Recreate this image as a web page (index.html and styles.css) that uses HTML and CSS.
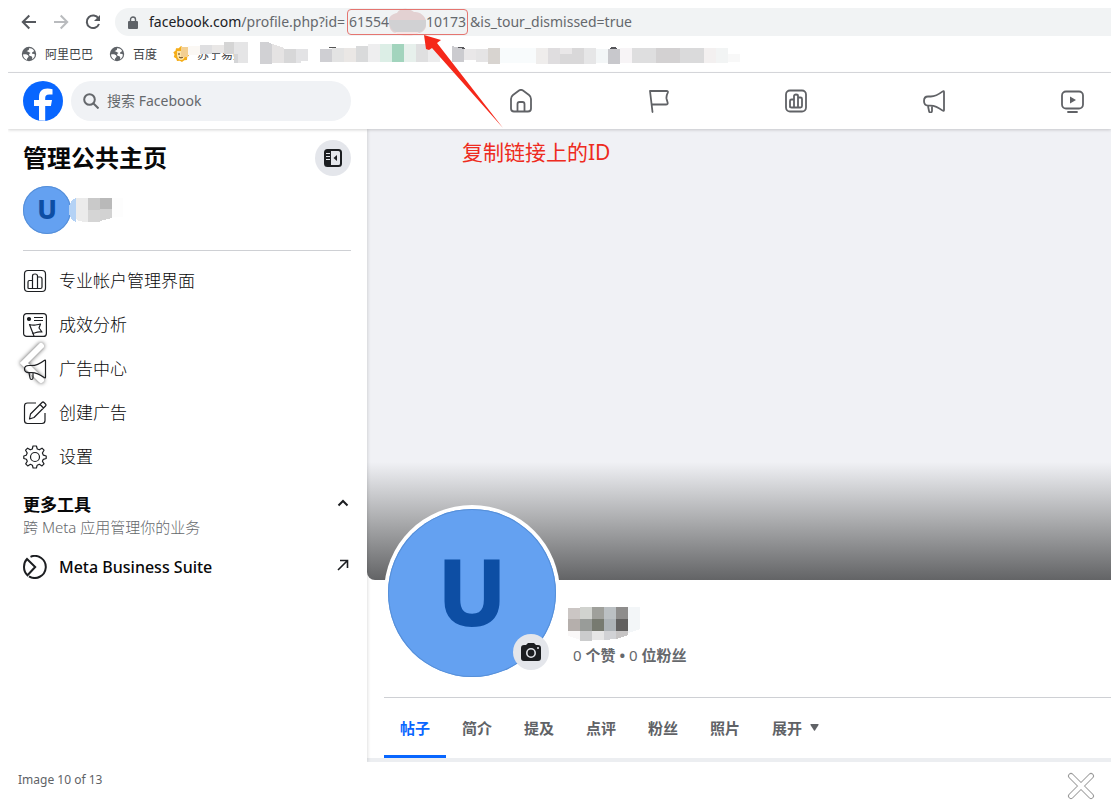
FILE: index.html
```html
<!DOCTYPE html>
<html lang="zh-CN">
<head>
<meta charset="utf-8">
<meta name="viewport" content="width=device-width, initial-scale=1">
<title>Facebook</title>
<link rel="stylesheet" href="styles.css">
</head>
<body>
<div class="viewer">
<div class="stage">
  <div class="toolbar">
    <button class="tool" aria-label="后退"><svg viewBox="0 0 16 16"><path d="M15 8H2M8.300 1.500 1.800 8l6.500 6.500"/></svg></button>
    <button class="tool muted" aria-label="前进"><svg viewBox="0 0 16 16"><path d="M1 8h13M7.700 1.500 14.200 8l-6.500 6.500"/></svg></button>
    <button class="tool" aria-label="刷新"><svg viewBox="0 0 16 16"><path d="M13.500 4.500A6.300 6.300 0 1 0 14 10"/><path class="solid" d="M15 1v6H9z"/></svg></button>
    <div class="address">
      <svg class="lock" viewBox="0 0 10 13"><path d="M1 5h8q1 0 1 1v6q0 1-1 1H1q-1 0-1-1V6q0-1 1-1z" fill="#5f6368"/><path d="M2.500 6V3.500a2.500 2.500 0 0 1 5 0V6" fill="none" stroke="#5f6368" stroke-width="1.400"/></svg>
      <span class="url"><b>facebook.com</b>/profile.php?id=<span class="page-id">61554<svg class="smudge" viewBox="0 0 37 28"><path d="M0 14C-1 8 4 6 8 5C11-1 21 0 25 4C31 3 38 9 37 15C38 20 34 25 29 25C22 29 14 28 8 25C2 25 0 20 0 14z" fill="#e3d1d2"/><path d="M0 12h37v4q-1 7-8 8H7q-7-3-7-12z" fill="#d1d1d3"/><path d="M6 24h24q-4 4-12 4-8 0-12-4z" fill="#f6e6e6"/></svg>10173</span>&amp;is_tour_dismissed=true</span>
    </div>
  </div>
  <div class="bookmarks">
    <a href="#"><svg class="globe" viewBox="0 0 16 16"><circle cx="8" cy="8" r="7.200" fill="#5f6368"/><path d="M2 8.500c2.500-.5 5 0 5.500 1.500s-1.800 1.600-1.500 4C3.500 13 2 11 2 8.500zM8 2.200c2.500-.3 4.300 1 5.200 2.800-.8 1-2 .8-2.200 2-.3 1.500 2.500.2 2.800 1.800.1 2-1.300 3.600-2.800 4.500.8-2.300-.3-3-1.600-3.200-2-.6-1.500-2.500.2-3.100C8 6.500 7 5 5.500 5.300 6.500 4.500 8.500 4.500 8 2.200z" fill="#fff"/></svg>阿里巴巴</a>
    <a href="#"><svg class="globe" viewBox="0 0 16 16"><circle cx="8" cy="8" r="7.200" fill="#5f6368"/><path d="M2 8.500c2.500-.5 5 0 5.500 1.500s-1.800 1.600-1.500 4C3.500 13 2 11 2 8.500zM8 2.200c2.500-.3 4.300 1 5.200 2.800-.8 1-2 .8-2.200 2-.3 1.500 2.500.2 2.800 1.800.1 2-1.300 3.600-2.800 4.500.8-2.300-.3-3-1.600-3.200-2-.6-1.500-2.500.2-3.100C8 6.500 7 5 5.500 5.300 6.500 4.500 8.500 4.500 8 2.200z" fill="#fff"/></svg>百度</a>
    <a href="#" class="covered"><svg class="globe" viewBox="0 0 16 16"><path d="M8 0l2 1.500 2.500-.3 1 2.300 2.300 1L15.300 7 16 9.500l-1.800 1.800L14 14l-2.700.3L9 16l-2.300-1.300-2.700.3-.8-2.500L.8 11 1.500 8.500.3 6.200 2.500 4.800 3 2.200l2.700.1z" fill="#f5ad18"/><path d="M4 5h8v5q-1 4-4 4t-4-4z" fill="#ffe4a6"/><path d="M6 7v2M9 8v2M6 11q2 2 4 0" stroke="#55391a" fill="none"/></svg>苏宁易购
      <svg class="redaction" viewBox="180 40 560 28" shape-rendering="crispEdges">
        <path d="M181 47h7v10h-7z" fill="#f3cf91"/><path d="M188 46h12v9h-12z" fill="#fbf8f4"/><path d="M200 45h12v9h-12z" fill="#dfdfe1"/><path d="M212 45h12v8h-12z" fill="#e9e7e6"/><path d="M224 42h12v12h-12z" fill="#d5d5d5"/><path d="M234 42h14v21h-14z" fill="#e5e5e6"/><path d="M234 54h4v9h-4z" fill="#d4d5d7"/><path d="M188 60h46v6h-46z" fill="#fff"/>
        <path d="M260 42h8l4 2v20h-12z" fill="#d1d1d4"/><path d="M272 44l12 4v15h-12z" fill="#e5e3e3"/><path d="M284 49h12v14h-12z" fill="#d7d7d8"/><path d="M296 49h12v12h-7v2h-5z" fill="#e3e3e5"/>
        <path d="M328 48q5-3 9 0z" fill="#555"/><path d="M320 49h12v13h-12z" fill="#cfcfd3"/><path d="M332 48h12v14h-12z" fill="#e3e3e3"/><path d="M344 48h12v14h-12z" fill="#eae7e5"/><path d="M356 46h12v16h-12z" fill="#d9dadb"/><path d="M368 44h12v18h-12z" fill="#eeeeef"/><path d="M380 44h12v18h-12z" fill="#dceee6"/><path d="M392 44h12v18h-12z" fill="#a2d4bd"/><path d="M404 44h12v18h-12z" fill="#e7f0ec"/><path d="M416 44h12v18h-12z" fill="#dfdfe0"/><path d="M428 46h12v16h-12z" fill="#ececed"/>
        <path d="M457 48q4-2 8 0v1h-8zM610 48q4-2 7 0v1h-7z" fill="#56565a"/><path d="M452 46l12 3v13h-12z" fill="#cbcbcf"/><path d="M464 49h12v11h-12z" fill="#e9e7e8"/><path d="M476 49h12v13h-12z" fill="#e5e4e5"/><path d="M488 48h12v16h-12z" fill="#d8d4d0"/><path d="M500 48h36v15h-36z" fill="#f8fbfc"/><path d="M536 48h12v16h-12z" fill="#efedec"/><path d="M548 48h12v16h-12z" fill="#dfdddf"/><path d="M560 48h24v16h-24z" fill="#d9d8d9"/><path d="M560 48h12v6h-12z" fill="#e9e7e8"/><path d="M584 48h12v16h-12z" fill="#e6e6e7"/><path d="M596 49h12v14h-12z" fill="#f3f6f7"/><path d="M608 49h12v15h-12z" fill="#c8c8cc"/><path d="M620 48h12v15h-12z" fill="#f7f4f6"/><path d="M632 48h24v15h-24z" fill="#dededf"/><path d="M656 48h24v15h-24z" fill="#d3d1d2"/><path d="M680 48h24v15h-24z" fill="#dadadb"/><path d="M704 48h12v15h-12z" fill="#f3f0f0"/><path d="M716 48h12v15h-12z" fill="#f2f4f4"/><path d="M728 54h12v8h-12z" fill="#f8f8f8"/>
      </svg></a>
  </div>
  <header class="site-header">
    <a href="#" class="logo" aria-label="Facebook"><svg viewBox="0 0 40 40"><circle cx="20" cy="20" r="20" fill="#0866ff"/><path d="M16 39.500V25h-5v-6h5v-2.500C16 10.500 19 7.500 24.500 7.500c1.500 0 3.500.2 5 .7v5.300h-3.300c-3 0-4 1.200-4 3.600V19h6.800l-1.100 6h-5.700v14.800z" fill="#fff"/></svg></a>
    <label class="search"><svg viewBox="0 0 16 16"><circle cx="6.500" cy="6.500" r="5.300"/><path d="m10.500 10.500 5 5"/></svg><input type="search" placeholder="搜索 Facebook" aria-label="搜索 Facebook"></label>
    <nav class="site-nav">
      <a href="#" aria-label="首页"><svg viewBox="0 0 24 24"><path d="M2 10Q2 7.500 4 6l6-4.500q2-1.300 4 0L20 6q2 1.500 2 4v9.500q0 3-3 3H5q-3 0-3-3zM8.500 22v-7q0-2 2-2h3q2 0 2 2v7"/></svg></a>
      <a href="#" aria-label="公共主页"><svg viewBox="0 0 24 24"><path d="M5.500 23 3 2h16.500q2 0 1.200 1.800Q19 7 19.600 10l1 3.500q.5 2-1.600 2H4.700"/></svg></a>
      <a href="#" aria-label="管理界面"><svg viewBox="0 0 24 24"><rect x="2" y="1.500" width="20" height="21" rx="4"/><path d="M6 18v-6q0-1.500 1.500-1.500H10V7q0-1.500 2-1.500T14 7v11.500H7.500Q6 18.500 6 17zm4-7.500v8m4-10h2.500q1.500 0 1.500 1.500v7q0 1.500-1.500 1.500H14"/></svg></a>
      <a href="#" aria-label="广告"><svg viewBox="0 0 24 24"><path d="M22 3v18q0 1.500-1.300.6-6.700-5-12-5H6Q2 16.500 2 12t4-4.500h2.700q5.300 0 12-5.100Q22 1.500 22 3zM6 17l1 5q.2 1.500 1.500 1.500T10 22v-5"/></svg></a>
      <a href="#" aria-label="视频"><svg viewBox="0 0 24 24"><rect x="2" y="2.500" width="21" height="17" rx="4"/><path d="M8 23h9"/><path class="solid" d="M10 7.500v7l6-3.500z"/></svg></a>
    </nav>
  </header>
  <div class="columns">
    <aside class="sidebar">
      <div class="side-head"><h1>管理公共主页</h1><button class="round" aria-label="收起侧栏"><svg viewBox="0 0 20 20"><rect x="2" y="2" width="16" height="16" rx="2.500" fill="none" stroke="#1c1e21" stroke-width="2"/><path d="M2 2h6v16H2z" fill="#1c1e21"/><path d="M3 5.500h4M3 8.500h4M3 11.500h4" stroke="#e4e6eb"/><path d="m14 7-3.500 3 3.500 3z" fill="#1c1e21"/></svg></button></div>
      <div class="account"><span class="avatar small">U</span><svg class="name-mask" viewBox="0 0 54 24" shape-rendering="crispEdges"><path d="M7 0v24Q0 22 0 12T7 0z" fill="#b4d2f5"/><path d="M7 0h12v24Q7 24 7 20z" fill="#ebebeb"/><path d="M19 0h12v24H19z" fill="#c9c9c9"/><path d="M31 0h12v20l-12 3z" fill="#d2d2d2"/><path d="M31 0h12v11H31z" fill="#b9b9b9"/><path d="M19 12h12v12H19z" fill="#d5d5d5"/><path d="M43 0h11v19H43z" fill="#fdfdfd"/></svg></div>
      <nav class="menu">
        <a href="#"><svg viewBox="0 0 24 24"><rect x="1.500" y="1.500" width="21" height="21" rx="3.500"/><path d="M5 19v-6q0-1.500 1.500-1.500H9.500V7q0-2 2.500-2t2.500 2v12.500H6Q5 19.500 5 18.500zm4.500-7.500v8m5-11.500H17q2 0 2 2v8q0 1.500-1.500 1.500h-3"/></svg><span>专业帐户管理界面</span></a>
        <a href="#"><svg viewBox="0 0 24 24"><rect x=".6" y=".6" width="22.800" height="22.800" rx="3"/><circle cx="6" cy="6" r="1.500" fill="#1c1e21"/><path d="M11 4.500h9M11 7.500h9M11 23 6.500 11.500q3 1 6 .5t5-1l-1.500 4 3 4q-4-.5-6 .5t-4 .5"/></svg><span>成效分析</span></a>
        <a href="#"><svg viewBox="0 0 24 24"><path d="M22.500 4v16q0 1.500-1.300.6-6.700-5-12.500-5H6Q1.500 15.500 1.500 12T6 8.500h2.700q5.800 0 12.500-5.100 1.300-.9 1.300.6zM6 16l1 5q.2 1.500 1.500 1.500T10 21v-5"/></svg><span>广告中心</span></a>
        <a href="#"><svg viewBox="0 0 24 24"><path d="M13 2H4.500Q1.500 2 1.500 5v14.500q0 3 3 3h14.500q3 0 3-3V12M6.500 18l1-5L19 1.500q1-1 2 0l1.500 1.500q1 1 0 2L11 16.500zM17 3.500 20.500 7"/></svg><span>创建广告</span></a>
        <a href="#"><svg viewBox="0 0 24 24"><circle cx="12" cy="12" r="4.500"/><path d="m10 1-.7 3-2 .8-2.700-1.600-2 2L4.200 8l-1 2.200L.8 11v2.500l2.600.8.9 2-1.600 2.600 2 2 2.700-1.600 2 .9.7 2.800h3.300l.8-2.800 2.100-.9 2.700 1.600 2-2-1.600-2.600.9-2 2.900-.8V11l-2.800-.8-1-2.200L21 5.200l-2-2-2.700 1.600-2-.8-.9-3z"/></svg><span>设置</span></a>
      </nav>
      <button class="more"><span><strong>更多工具</strong><small>跨 Meta 应用管理你的业务</small></span><svg viewBox="0 0 12 12"><path d="m1.500 8.500 4.500-4.500 4.500 4.500"/></svg></button>
      <a href="#" class="suite"><svg viewBox="0 0 24 24"><path d="M7.500 1.800A11 11 0 1 1 6 21.300M4 4l8.200 8L4.500 20.300Q1 17 1 12t3-8z"/></svg><span>Meta Business Suite</span><svg class="out" viewBox="0 0 12 12"><path d="M1 11 10.500 1.500M3 1.500h7.500V9"/></svg></a>
    </aside>
    <main class="profile">
      <div class="cover"></div>
      <section class="identity">
        <div class="portrait"><span class="avatar">U</span><button class="round camera" aria-label="更换头像"><svg viewBox="0 0 20 18"><path d="M3 2h2l2-2h6l2 2h2q3 0 3 3v10q0 3-3 3H3q-3 0-3-3V5q0-3 3-3z" fill="#1c1e21"/><circle cx="10" cy="10" r="4.200" fill="none" stroke="#e4e6eb" stroke-width="1.600"/><circle cx="17" cy="5" r="1" fill="#e4e6eb"/></svg></button></div>
        <div class="facts">
          <svg class="title-mask" viewBox="0 0 72 34" shape-rendering="crispEdges"><path d="M0 1h12v11H0z" fill="#cbc6c4"/><path d="M12 0h12v12H12z" fill="#d1d3cf"/><path d="M24 0h12v12H24z" fill="#9fa09b"/><path d="M36 0h12v12H36z" fill="#bbc0c3"/><path d="M48 0h12v12H48z" fill="#8e8d8c"/><path d="M60 0h12v22l-12 4z" fill="#f3f6f8"/><path d="M0 12h12v12H0z" fill="#b5afac"/><path d="M12 12h12v12H12z" fill="#999c99"/><path d="M24 12h12v12H24z" fill="#777a70"/><path d="M36 12h12v12H36z" fill="#adb3b7"/><path d="M48 12h12v12H48z" fill="#61605f"/><path d="M0 24h12v9L0 29z" fill="#faf8f8"/><path d="M12 24h12v10H12z" fill="#cbcccd"/><path d="M24 24h12v9H24z" fill="#e6e6e6"/><path d="M36 24h12v8l-12 1z" fill="#d1d2d5"/><path d="M48 24h12v4l-12 4z" fill="#c6c4c4"/></svg>
          <p><span>0</span> 个赞 • <span>0</span> 位粉丝</p>
        </div>
      </section>
      <nav class="tabs"><a href="#" class="active">帖子</a><a href="#">简介</a><a href="#">提及</a><a href="#">点评</a><a href="#">粉丝</a><a href="#">照片</a><a href="#">展开<svg viewBox="0 0 9 7"><path d="M1 0h7q1 0 .5 1L5 6.500q-.5.500-1 0L.5 1Q0 0 1 0z" fill="#606266"/></svg></a></nav>
    </main>
  </div>
  <div class="note">复制链接上的ID</div>
  <svg class="arrow" viewBox="0 0 82 96"><path d="M0 1 17 6 13 9 79 94 8 14 5 16 2 15z" fill="#f5281a"/></svg>
</div>
<footer class="caption">Image 10 of 13</footer>
<button class="previous" aria-label="上一张"><svg viewBox="0 0 36 48"><path d="m25 7-17 17 17 17"/></svg></button>
<button class="close" aria-label="关闭"><svg viewBox="0 0 28 28"><path class="edge" d="m4 4 20 20M24 4 4 24"/><path class="core" d="m4 4 20 20M24 4 4 24"/></svg></button>
</div>
</body>
</html>
```
FILE: styles.css
```css
* { box-sizing: border-box; }
body { margin: 0; background: #fff; color: #080809; font-family: "Noto Sans", "Noto Sans CJK SC", sans-serif; font-size: 15px; }
a { color: inherit; text-decoration: none; }
button { border: 0; padding: 0; background: none; color: inherit; font: inherit; cursor: pointer; }
svg { display: block; flex: none; }
h1, p { margin: 0; }

.viewer { position: relative; min-height: 100vh; }
.stage { position: relative; margin: 0 6px 0 8px; overflow: hidden; }

.toolbar { display: flex; align-items: center; gap: 16px; height: 44px; padding-left: 13px; }
.tool svg { width: 16px; height: 16px; fill: none; stroke: #55585d; stroke-width: 2; }
.tool.muted svg { stroke: #b9bbbe; }
.tool .solid { fill: #55585d; stroke: none; }
.address { flex: 1; display: flex; align-items: center; gap: 11px; height: 28px; margin-left: -2px; padding-left: 13px; background: #f1f3f4; border-radius: 14px 0 0 14px; }
.lock { width: 10px; height: 13px; }
.url { display: flex; align-items: center; padding-bottom: 1px; color: #65686d; font-size: 14px; white-space: pre; }
.url b { color: #202124; font-weight: 400; }
.page-id { display: flex; align-items: center; height: 22px; margin: 0 4px; outline: 1px solid #e57570; outline-offset: 1px; border-radius: 2px; }
.smudge { width: 37px; height: 28px; }

.bookmarks { display: flex; gap: 16px; height: 29px; padding: 0 0 8px 13px; border-bottom: 1px solid #dadce0; font-size: 12px; color: #3c4043; }
.bookmarks a { display: flex; align-items: center; gap: 8px; white-space: nowrap; }
.globe { width: 16px; height: 16px; }
.covered { position: relative; }
.redaction { position: absolute; left: 7px; top: -4px; width: 560px; height: 28px; }

.site-header { position: relative; display: flex; align-items: center; height: 56px; padding-left: 15px; background: #fff; box-shadow: 0 1px 3px #0000002e; z-index: 2; }
.logo svg { width: 40px; height: 40px; }
.search { display: flex; align-items: center; gap: 8px; width: 280px; height: 40px; margin-left: 8px; padding: 0 12px; border-radius: 20px; background: #f0f2f5; }
.search svg { width: 16px; height: 16px; fill: none; stroke: #65686c; stroke-width: 2; }
.search input { flex: 1; min-width: 0; border: 0; padding: 0 0 2px; outline: 0; background: none; font: inherit; font-size: 14px; }
.search input::placeholder { color: #65686c; opacity: 1; }
.site-nav { flex: 1; display: flex; margin: 0 -30px 0 101px; }
.site-nav a { flex: 1; display: flex; justify-content: center; }
.site-nav svg { width: 24px; height: 24px; fill: none; stroke: #606266; stroke-width: 1.8; stroke-linejoin: round; stroke-linecap: round; }
.site-nav .solid { fill: #606266; stroke: none; }

.columns { display: flex; }
.sidebar { width: 359px; flex: none; padding: 11px 16px 0 15px; box-shadow: 1px 0 3px #0000001f; z-index: 1; }
.side-head { display: flex; justify-content: space-between; align-items: center; }
h1 { font-size: 24px; line-height: 36px; font-weight: 700; }
.round { display: grid; place-items: center; width: 36px; height: 36px; border-radius: 50%; background: #e4e6eb; }
.round svg { width: 20px; height: 20px; }
.account { display: flex; align-items: center; padding: 10px 0 16px; border-bottom: 1px solid #ced0d4; }
.avatar { display: grid; place-items: center; width: 100%; aspect-ratio: 1; padding-bottom: 4px; border-radius: 50%; background: #64a1f1; box-shadow: inset 0 0 0 1px #568fd8; color: #0d4ea4; font-weight: 800; font-size: 92px; line-height: 1; }
.avatar.small { width: 48px; padding-bottom: 2px; font-size: 26px; }
.name-mask { width: 54px; height: 24px; margin-left: -2px; }
.menu { padding-top: 8px; }
.menu a { display: flex; align-items: center; gap: 12px; height: 44px; font-size: 17px; line-height: 24px; font-weight: 300; }
.menu span { padding-bottom: 1px; }
.menu svg { width: 24px; height: 24px; fill: none; stroke: #1c1e21; stroke-width: 1.2; stroke-linejoin: round; }
.more { display: flex; justify-content: space-between; width: 100%; padding-top: 15px; text-align: left; }
.more strong { display: block; font-size: 17px; line-height: 22px; }
.more small { display: block; color: #65686c; font-size: 15px; line-height: 22px; font-weight: 300; }
.more svg { width: 12px; height: 12px; margin: 3px 2px; fill: none; stroke: #1c1e21; stroke-width: 2; }
.suite { display: flex; align-items: center; gap: 12px; height: 36px; margin-top: 11px; font-size: 16px; font-weight: 500; }
.suite svg { width: 24px; height: 24px; fill: none; stroke: #1c1e21; stroke-width: 2; }
.suite .out { width: 12px; height: 12px; margin: 0 2px 4px auto; stroke-width: 1.6; }

.profile { flex: 1; min-width: 0; border-bottom: 4px solid #eceef1; }
.cover { height: 451px; border-radius: 0 0 0 8px; background: linear-gradient(#f0f1f5 0 333px, #a9aaac 393px, #636466 451px); }
.identity { position: relative; display: flex; gap: 8px; margin: -75px 0 0 17px; padding-bottom: 16px; }
.portrait { position: relative; width: 176px; padding: 4px; background: #fff; border-radius: 50%; }
.camera { position: absolute; right: 11px; bottom: 11px; }
.facts { padding-top: 102px; }
.title-mask { width: 72px; height: 34px; }
.facts p { padding: 3px 0 0 5px; color: #65686c; font-size: 15px; line-height: 22px; font-weight: 700; }
.facts span { font-weight: 400; }
.tabs { display: flex; height: 61px; margin-left: 17px; border-top: 1px solid #ced0d4; color: #606266; font-weight: 600; }
.tabs a { display: flex; align-items: center; gap: 8px; padding: 1px 16px 0; border-bottom: 3px solid transparent; }
.tabs .active { color: #0866ff; border-color: #0866ff; }
.tabs svg { width: 9px; height: 7px; }

.note { position: absolute; z-index: 3; left: 454px; top: 137px; color: #ee2b20; font-size: 21px; line-height: 30px; }
.arrow { position: absolute; z-index: 3; left: 416px; top: 34px; width: 82px; height: 96px; }
.caption { padding: 9px 18px; color: #606266; font-size: 12px; line-height: 18px; }
.previous { position: absolute; left: 16px; top: 339px; }
.previous svg { width: 36px; height: 48px; fill: none; stroke: #fff; stroke-width: 6; stroke-linecap: round; filter: drop-shadow(0 0 2px #000000b0); }
.close { position: absolute; right: 22px; bottom: 9px; }
.close svg { width: 28px; height: 28px; stroke-linecap: round; }
.edge { stroke: #999; stroke-width: 6; }
.core { stroke: #fff; stroke-width: 4; }
```
